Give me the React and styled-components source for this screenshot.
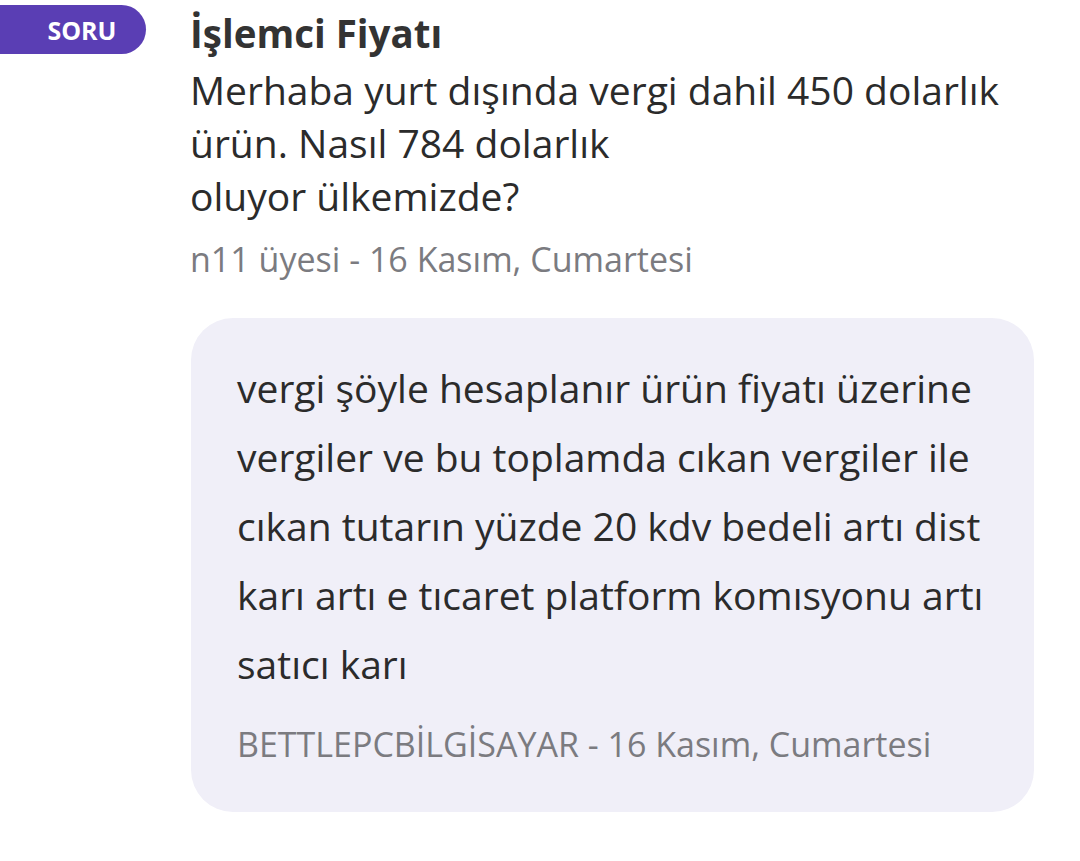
import React from "react";
import styled, { createGlobalStyle } from "styled-components";

const Global = createGlobalStyle`
  html, body { margin: 0; padding: 0; background: #fff; }
  body { font-family: "Open Sans", "Noto Sans", sans-serif; }
`;

const Page = styled.div`
  width: 1080px;
  height: 861px;
  background: #fff;
  overflow: hidden;
`;

const QuestionRow = styled.div`
  display: grid;
  grid-template-columns: 146px 1fr;
  column-gap: 44px;
  padding-top: 5px;
`;

const Badge = styled.div`
  height: 49px;
  background: #5a3eb4;
  border-radius: 0 25px 25px 0;
  color: #fff;
  font-weight: 700;
  font-size: 25px;
  display: flex;
  align-items: center;
  justify-content: center;
  padding-left: 18px;
  box-sizing: border-box;
`;

const QuestionBody = styled.div`
  display: flex;
  flex-direction: column;
  padding-right: 40px;
`;

const Title = styled.div`
  font-size: 38.5px;
  font-weight: 700;
  color: #333;
  line-height: 53px;
  margin-top: 2px;
`;

const Text = styled.div`
  font-size: 39px;
  color: #2b2b2b;
  line-height: 53px;
  margin-top: 3px;
`;

const Meta = styled.div`
  font-size: 34px;
  color: #7b7b80;
  line-height: 44px;
  margin-top: ${(p) => p.$mt || 0}px;
`;

const AnswerCard = styled.div`
  margin: 37px 46px 0 191px;
  background: #f0eff8;
  border-radius: 42px;
  padding: 35px 30px 46px 46px;
`;

const AnswerText = styled.div`
  font-size: 39px;
  color: #2b2b2b;
  line-height: 69px;
`;

export default function App() {
  return (
    <Page>
      <Global />
      <QuestionRow>
        <Badge>SORU</Badge>
        <QuestionBody>
          <Title>İşlemci Fiyatı</Title>
          <Text>
            Merhaba yurt dışında vergi dahil 450 dolarlık
            <br />
            ürün. Nasıl 784 dolarlık
            <br />
            oluyor ülkemizde?
          </Text>
          <Meta $mt={15}>n11 üyesi - 16 Kasım, Cumartesi</Meta>
        </QuestionBody>
      </QuestionRow>
      <AnswerCard>
        <AnswerText>
          vergi şöyle hesaplanır ürün fiyatı üzerine
          <br />
          vergiler ve bu toplamda cıkan vergiler ile
          <br />
          cıkan tutarın yüzde 20 kdv bedeli artı dist
          <br />
          karı artı e tıcaret platform komısyonu artı
          <br />
          satıcı karı
        </AnswerText>
        <Meta $mt={24}>BETTLEPCBİLGİSAYAR - 16 Kasım, Cumartesi</Meta>
      </AnswerCard>
    </Page>
  );
}
